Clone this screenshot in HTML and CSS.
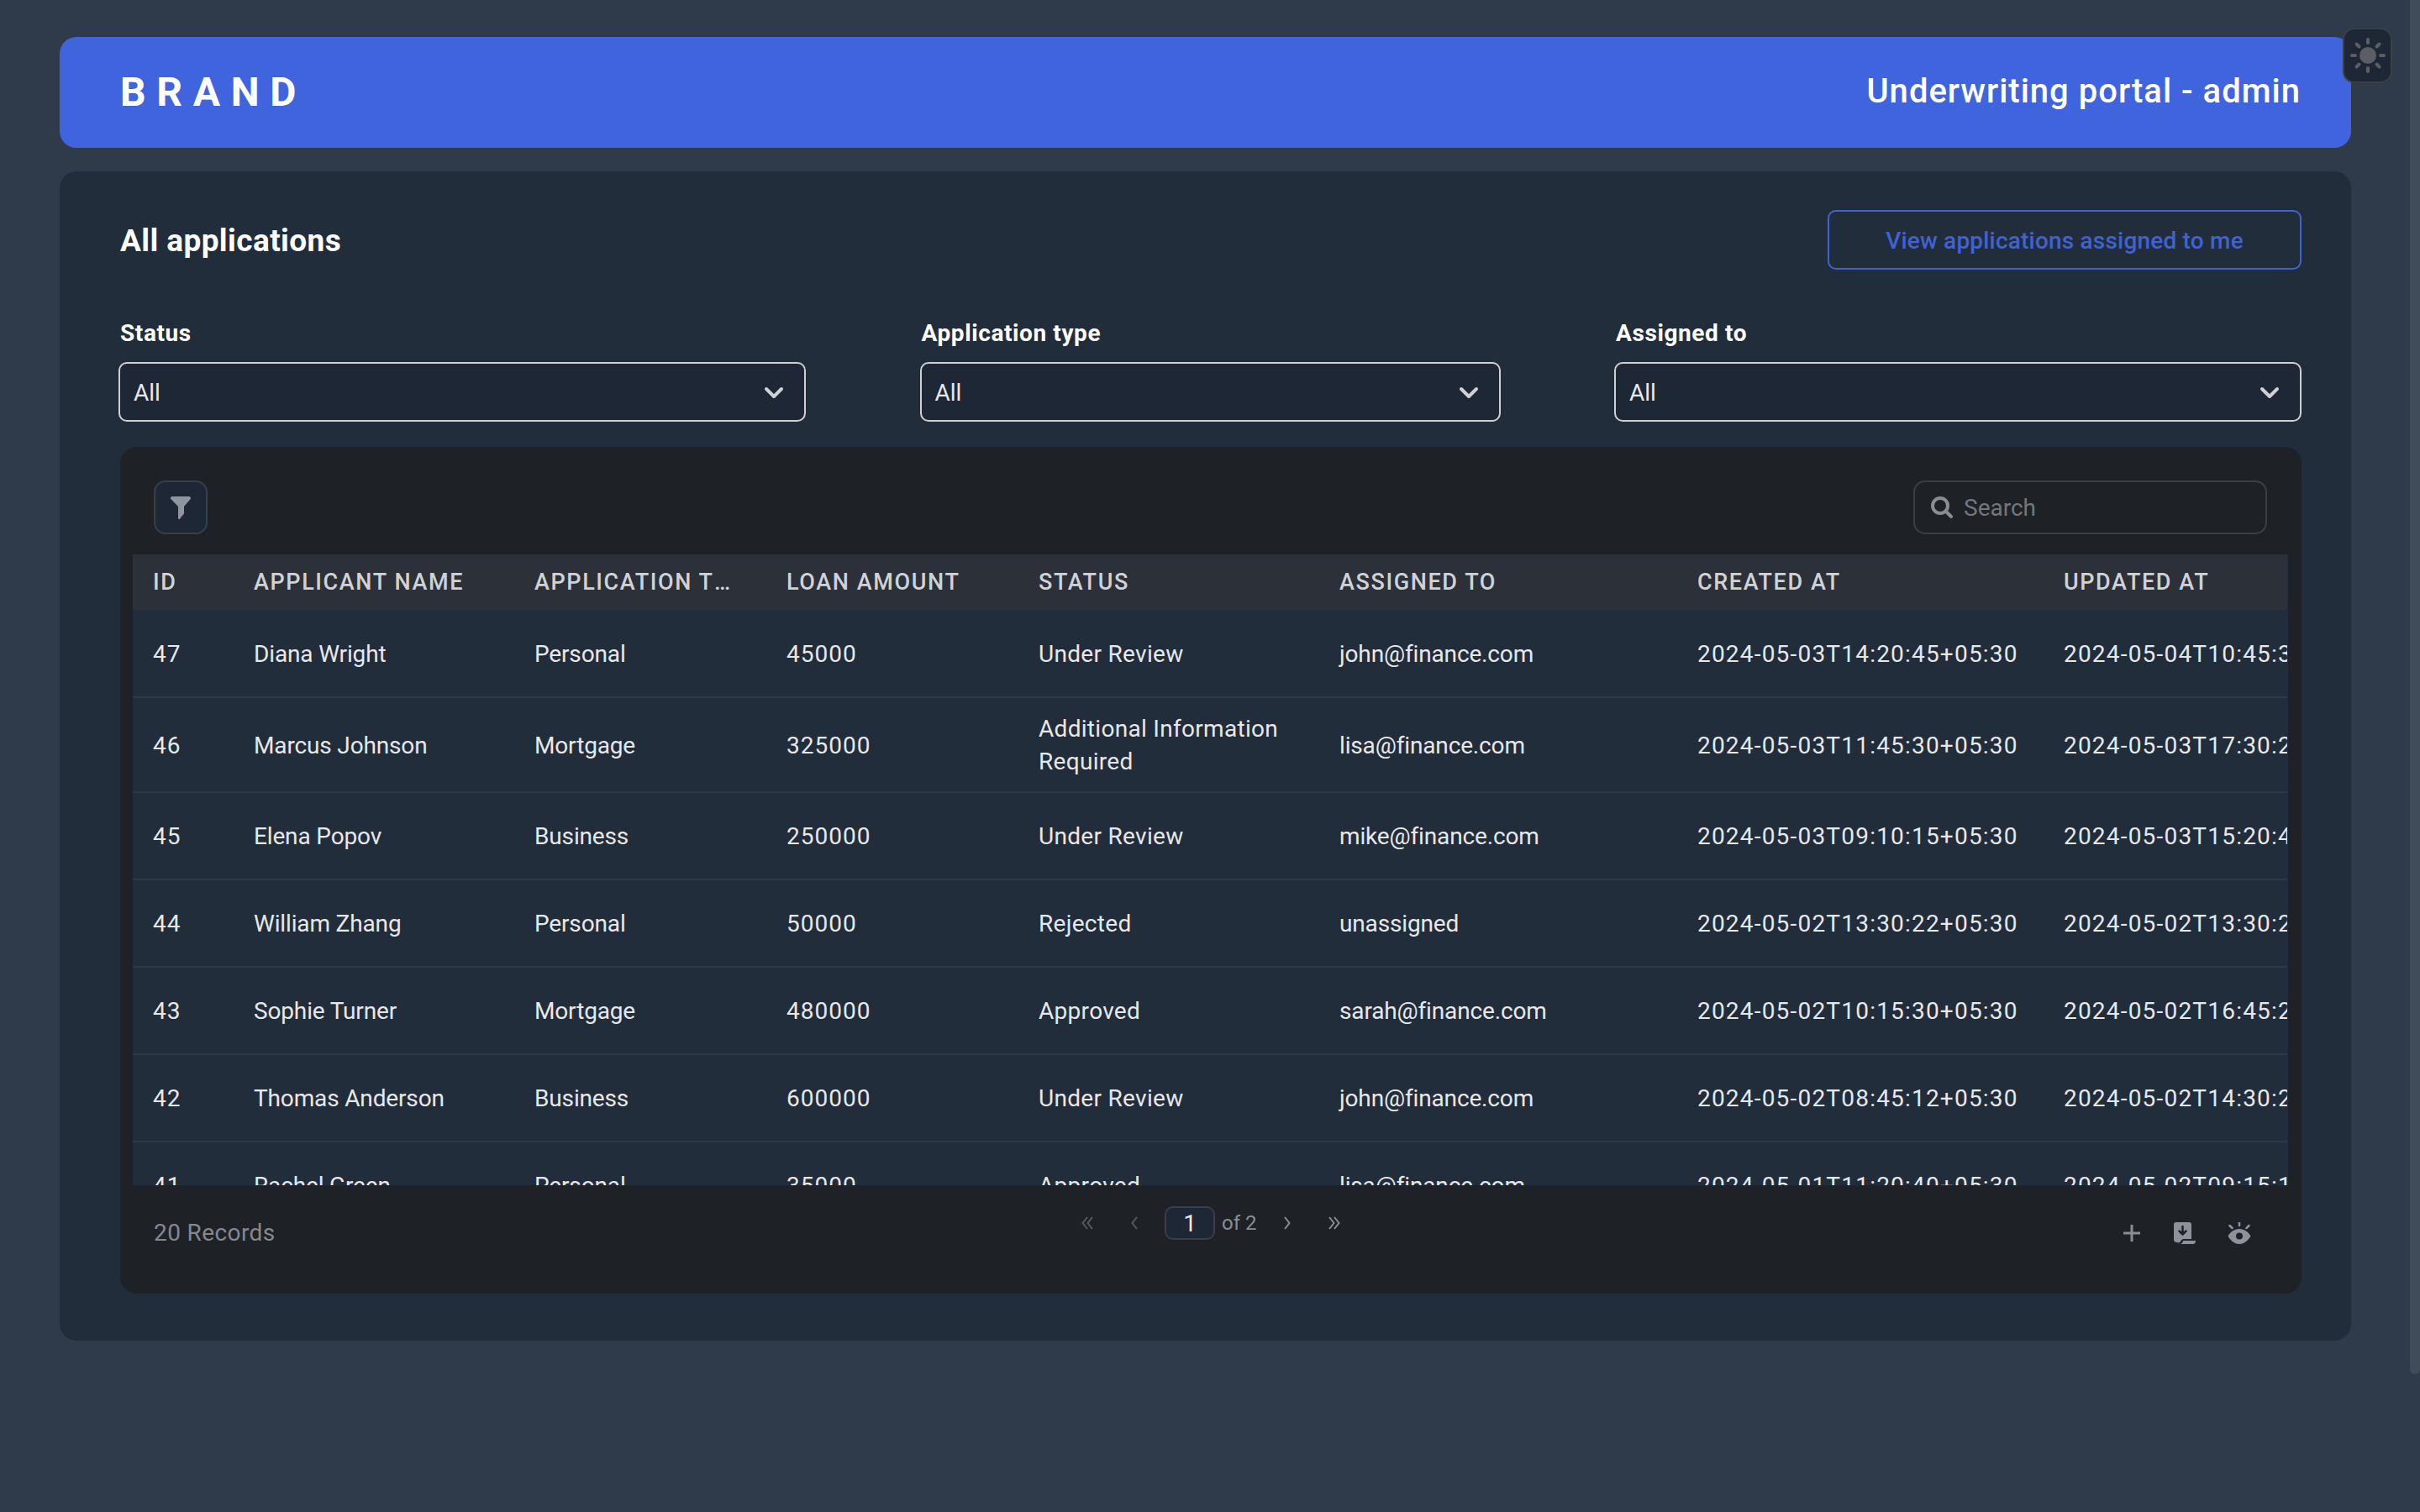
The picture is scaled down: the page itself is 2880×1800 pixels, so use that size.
FILE: index.html
```html
<!DOCTYPE html>
<html lang="en">
    <head>
        <meta charset="UTF-8">
        <meta name="viewport" content="width=device-width, initial-scale=1.0">
        <title>Underwriting portal - admin</title>
        <link rel="stylesheet" href="styles.css">
    </head>
    <body>
        <div class="scroll-thumb"></div>
        <button class="theme-toggle" aria-label="Toggle theme">
            <svg width="44" height="44" viewBox="0 0 44 44" fill="none" stroke="#5b5e63" stroke-width="4" stroke-linecap="round">
                <circle cx="22" cy="22" r="10" fill="#5b5e63" stroke="none"/>
                <path d="M22 3v4M22 37v4M3 22h4M37 22h4M8.500 8.500l3 3M32.500 32.500l3 3M8.500 35.500l3-3M32.500 11.500l3-3"/>
            </svg>
        </button>
        <div class="page">
            <header class="topbar">
                <div class="brand">BRAND</div>
                <div class="portal">Underwriting portal - admin</div>
            </header>
            <main class="card">
                <div class="card-head">
                    <h1 class="card-title">All applications</h1>
                    <button class="assigned-btn">View applications assigned to me</button>
                </div>
                <div class="filters">
                    <div class="field">
                        <label>Status</label>
                        <div class="select"><span>All</span>
                            <svg width="24" height="16" viewBox="0 0 24 16" fill="none" stroke="#d0d1d3" stroke-width="4" stroke-linecap="round" stroke-linejoin="round"><path d="M3 3l9 9 9-9"/></svg>
                        </div>
                    </div>
                    <div class="field">
                        <label>Application type</label>
                        <div class="select"><span>All</span>
                            <svg width="24" height="16" viewBox="0 0 24 16" fill="none" stroke="#d0d1d3" stroke-width="4" stroke-linecap="round" stroke-linejoin="round"><path d="M3 3l9 9 9-9"/></svg>
                        </div>
                    </div>
                    <div class="field">
                        <label>Assigned to</label>
                        <div class="select"><span>All</span>
                            <svg width="24" height="16" viewBox="0 0 24 16" fill="none" stroke="#d0d1d3" stroke-width="4" stroke-linecap="round" stroke-linejoin="round"><path d="M3 3l9 9 9-9"/></svg>
                        </div>
                    </div>
                </div>
                <section class="panel">
                    <div class="toolbar">
                        <button class="filter-btn" aria-label="Filter">
                            <svg width="26" height="28" viewBox="0 0 26 28" fill="#8f94a0"><path d="M3 1h20a2 2 0 0 1 1.500 3.300L17 13v8.500L12.500 27a1.200 1.200 0 0 1-2.500-.5V13L1.500 4.300A2 2 0 0 1 3 1z"/></svg>
                        </button>
                        <div class="search">
                            <svg width="28" height="28" viewBox="0 0 28 28" fill="none" stroke="#8a8d92" stroke-width="4" stroke-linecap="round"><circle cx="12" cy="12" r="9"/><path d="M19 19l6 6"/></svg>
                            <input type="text" placeholder="Search">
                        </div>
                    </div>
                    <div class="table-wrap">
                        <table class="grid">
                            <colgroup>
                                <col class="c-id"><col class="c-name"><col class="c-type"><col class="c-loan"><col class="c-status"><col class="c-assigned"><col class="c-created"><col class="c-updated">
                            </colgroup>
                            <thead>
                                <tr>
                                    <th>ID</th>
                                    <th>Applicant name</th>
                                    <th>Application type</th>
                                    <th>Loan amount</th>
                                    <th>Status</th>
                                    <th>Assigned to</th>
                                    <th>Created at</th>
                                    <th>Updated at</th>
                                </tr>
                            </thead>
                            <tbody>
                                <tr><td>47</td><td>Diana Wright</td><td>Personal</td><td>45000</td><td>Under Review</td><td>john@finance.com</td><td>2024-05-03T14:20:45+05:30</td><td>2024-05-04T10:45:30+05:30</td></tr>
                                <tr class="tall"><td>46</td><td>Marcus Johnson</td><td>Mortgage</td><td>325000</td><td class="wrap">Additional Information Required</td><td>lisa@finance.com</td><td>2024-05-03T11:45:30+05:30</td><td>2024-05-03T17:30:20+05:30</td></tr>
                                <tr><td>45</td><td>Elena Popov</td><td>Business</td><td>250000</td><td>Under Review</td><td>mike@finance.com</td><td>2024-05-03T09:10:15+05:30</td><td>2024-05-03T15:20:40+05:30</td></tr>
                                <tr><td>44</td><td>William Zhang</td><td>Personal</td><td>50000</td><td>Rejected</td><td>unassigned</td><td>2024-05-02T13:30:22+05:30</td><td>2024-05-02T13:30:22+05:30</td></tr>
                                <tr><td>43</td><td>Sophie Turner</td><td>Mortgage</td><td>480000</td><td>Approved</td><td>sarah@finance.com</td><td>2024-05-02T10:15:30+05:30</td><td>2024-05-02T16:45:20+05:30</td></tr>
                                <tr><td>42</td><td>Thomas Anderson</td><td>Business</td><td>600000</td><td>Under Review</td><td>john@finance.com</td><td>2024-05-02T08:45:12+05:30</td><td>2024-05-02T14:30:20+05:30</td></tr>
                                <tr><td>41</td><td>Rachel Green</td><td>Personal</td><td>35000</td><td>Approved</td><td>lisa@finance.com</td><td>2024-05-01T11:20:40+05:30</td><td>2024-05-02T09:15:10+05:30</td></tr>
                            </tbody>
                        </table>
                    </div>
                    <div class="panel-foot">
                        <div class="records">20 Records</div>
                        <div class="pager">
                            <button class="pg dim" aria-label="First page">
                                <svg width="14" height="16" viewBox="0 0 14 16" fill="none" stroke="currentColor" stroke-width="2"><path d="M7 1L1.500 8 7 15M13 1L7.500 8 13 15"/></svg>
                            </button>
                            <button class="pg dim" aria-label="Previous page">
                                <svg width="8" height="16" viewBox="0 0 8 16" fill="none" stroke="currentColor" stroke-width="2"><path d="M7 1L1.500 8 7 15"/></svg>
                            </button>
                            <input class="pg-input" type="text" value="1">
                            <span class="pg-of">of 2</span>
                            <button class="pg" aria-label="Next page">
                                <svg width="8" height="16" viewBox="0 0 8 16" fill="none" stroke="currentColor" stroke-width="2"><path d="M1 1l5.500 7L1 15"/></svg>
                            </button>
                            <button class="pg" aria-label="Last page">
                                <svg width="14" height="16" viewBox="0 0 14 16" fill="none" stroke="currentColor" stroke-width="2"><path d="M1 1l5.500 7L1 15M7 1l5.500 7L7 15"/></svg>
                            </button>
                        </div>
                        <div class="actions">
                            <svg width="24" height="24" viewBox="0 0 24 24" fill="none" stroke="#8a8d92" stroke-width="3"><path d="M12 2v20M2 12h20"/></svg>
                            <svg width="26" height="26" viewBox="0 0 26 26" fill="#8f929a">
                                <path d="M3 0h15a3 3 0 0 1 3 3v17h-9c-2 0-3 1-4 3-1 1-2 2-4 1-3 0-4-2-4-3V3a3 3 0 0 1 3-3z"/>
                                <path d="M11 22h15c0 2-1 4-3 4H8c2-1 3-2 3-4z"/>
                                <path d="M10.500 5v9M6.500 10.500l4 4 4-4" fill="none" stroke="#1e2226" stroke-width="2.500" stroke-linecap="round" stroke-linejoin="round"/>
                            </svg>
                            <svg width="28" height="26" viewBox="0 0 28 26" fill="#8f929a">
                                <path fill-rule="evenodd" d="M14 8c6 0 11 4 13.500 8.500C25 21 20 26 14 26S3 21 .5 16.500C3 12 8 8 14 8zm0 4.500a4 4 0 1 0 0 8 4 4 0 0 0 0-8z"/>
                                <path d="M14 0v4M2.500 4l3 3M25.500 4l-3 3" fill="none" stroke="#8f929a" stroke-width="2.500" stroke-linecap="round"/>
                            </svg>
                        </div>
                    </div>
                </section>
            </main>
        </div>
    </body>
</html>
```

FILE: styles.css
```css
:root {
    --bg: #2f3b4b;
    --card: #222d3b;
    --blue: #4064de;
    --panel: #1e2226;
    --field: #1e2735;
    --line: #3a3f46;
}
* {
    box-sizing: border-box;
    font-family: 'Roboto', 'Liberation Sans', sans-serif;
}
body {
    margin: 0px;
    height: 1800px;
    overflow: hidden;
    background: var(--bg);
    color: #fff;
}
.scroll-thumb {
    position: fixed;
    top: 0px;
    right: 0px;
    width: 12px;
    height: 1636px;
    background: #414c5a;
    border-radius: 0 0 6px 6px;
}
.theme-toggle {
    position: absolute;
    top: 33px;
    left: 2788px;
    width: 59px;
    height: 66px;
    padding: 0px;
    display: flex;
    align-items: center;
    justify-content: center;
    background: var(--field);
    border: 2px solid var(--line);
    border-radius: 14px;
}
.page {
    padding: 44px 82px 0 71px;
}
.topbar {
    display: flex;
    align-items: center;
    justify-content: space-between;
    height: 132px;
    padding: 0 60px 0 72px;
    background: var(--blue);
    border-radius: 20px;
}
.brand {
    font-size: 48px;
    font-weight: 700;
    letter-spacing: 12.700px;
    margin-top: -2px;
}
.portal {
    font-size: 40px;
    font-weight: 500;
    letter-spacing: 1px;
    margin-top: -4px;
}
.card {
    margin-top: 28px;
    padding: 46px 59px 56px 72px;
    background: var(--card);
    border-radius: 20px;
}
.card-head {
    display: flex;
    align-items: center;
    justify-content: space-between;
}
.card-title {
    margin: 2px 0 0;
    font-size: 37px;
    font-weight: 700;
    letter-spacing: 0.400px;
}
.assigned-btn {
    width: 564px;
    height: 71px;
    padding: 2px 0 0;
    font-size: 28px;
    font-weight: 500;
    letter-spacing: 0.200px;
    color: #3f62d4;
    background: transparent;
    border: 2px solid #3f62d4;
    border-radius: 10px;
}
.filters {
    display: flex;
    justify-content: space-between;
    margin: 59px 0 30px -2px;
}
.field:nth-child(1) { width: 818px; }
.field:nth-child(2) { width: 691px; }
.field:nth-child(3) { width: 818px; }
.field label {
    display: block;
    padding-left: 2px;
    height: 34px;
    line-height: 34px;
    font-size: 28px;
    font-weight: 700;
    letter-spacing: 0.600px;
}
.select {
    display: flex;
    align-items: center;
    justify-content: space-between;
    height: 71px;
    margin-top: 17px;
    padding: 2px 24px 0 16px;
    font-size: 28px;
    color: #e8e9eb;
    background: var(--field);
    border: 2px solid #cfd0d2;
    border-radius: 10px;
}
.panel {
    height: 1008px;
    background: var(--panel);
    border-radius: 20px;
    display: flex;
    flex-direction: column;
}
.toolbar {
    display: flex;
    align-items: center;
    justify-content: space-between;
    height: 128px;
    padding: 16px 41px 0 40px;
}
.filter-btn {
    width: 64px;
    height: 64px;
    padding: 0px;
    display: flex;
    align-items: center;
    justify-content: center;
    background: var(--field);
    border: 2px solid var(--line);
    border-radius: 14px;
}
.search {
    display: flex;
    align-items: center;
    gap: 12px;
    width: 421px;
    height: 64px;
    padding: 0 18px;
    border: 2px solid var(--line);
    border-radius: 14px;
}
.search input {
    flex: 1;
    min-width: 0;
    padding: 0px;
    font-size: 28px;
    color: #fff;
    background: transparent;
    border: 0px;
    outline: none;
}
.search input::placeholder {
    color: #73767b;
}
.table-wrap {
    height: 751px;
    margin: 0 16px 0 15px;
    overflow: hidden;
    background: var(--card);
}
.grid {
    width: 2564px;
    table-layout: fixed;
    border-collapse: collapse;
}
.c-id { width: 120px; }
.c-name { width: 334px; }
.c-type { width: 300px; }
.c-loan { width: 300px; }
.c-status { width: 358px; }
.c-assigned { width: 426px; }
.c-created { width: 436px; }
.c-updated { width: 290px; }
.grid th {
    height: 66px;
    padding: 0 36px 0 24px;
    text-align: left;
    font-size: 27px;
    font-weight: 500;
    letter-spacing: 1.600px;
    text-transform: uppercase;
    white-space: nowrap;
    overflow: hidden;
    text-overflow: ellipsis;
    color: #cfd2d6;
    background: #2c3038;
}
.grid th:last-child {
    padding-right: 0px;
}
.grid td {
    height: 104px;
    padding: 1px 24px 0;
    font-size: 28px;
    line-height: 39px;
    letter-spacing: -0.150px;
    color: #e6e8ea;
    border-bottom: 2px solid #2c3747;
    white-space: nowrap;
    overflow: hidden;
}
.grid td:nth-child(1),
.grid td:nth-child(4) { letter-spacing: 1px; }
.grid td:nth-child(5) { letter-spacing: 0.300px; }
.grid td:nth-child(7),
.grid td:nth-child(8) { letter-spacing: 1.200px; }
.grid td:last-child {
    padding-right: 0px;
}
.grid tr.tall td {
    height: 113px;
}
.grid td.wrap {
    white-space: normal;
}
.panel-foot {
    display: grid;
    grid-template-columns: 1fr auto 1fr;
    padding: 0 40px;
    flex: 1;
}
.records {
    padding-top: 40px;
    font-size: 28px;
    letter-spacing: 0.400px;
    color: #85888d;
}
.pager {
    display: flex;
    align-items: center;
    height: 40px;
    margin-top: 25px;
    color: #8a8d92;
}
.pg {
    display: flex;
    align-items: center;
    justify-content: center;
    width: 28px;
    height: 28px;
    padding: 0px;
    color: #8a8d92;
    background: transparent;
    border: 0px;
}
.pg.dim {
    color: #56595e;
}
.pg:nth-child(1) { margin-right: 28px; }
.pg:nth-child(2) { margin-right: 22px; }
.pg:nth-child(5) { margin-right: 28px; }
.pg-input {
    width: 60px;
    height: 40px;
    padding: 0px;
    text-align: center;
    font-size: 28px;
    color: #e6e8ea;
    background: var(--field);
    border: 2px solid var(--line);
    border-radius: 10px;
}
.pg-of {
    width: 41px;
    margin: 0 23px 0 8px;
    font-size: 24px;
    white-space: nowrap;
}
.actions {
    display: flex;
    align-items: center;
    justify-content: flex-end;
    gap: 38px;
    height: 58px;
    margin-top: 28px;
    padding-right: 20px;
}
```
